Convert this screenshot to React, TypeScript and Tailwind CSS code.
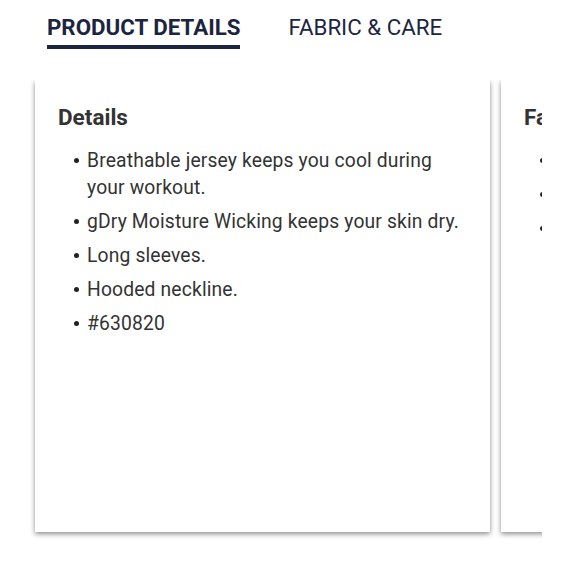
import React from "react";

const details = [
  "Breathable jersey keeps you cool during your workout.",
  "gDry Moisture Wicking keeps your skin dry.",
  "Long sleeves.",
  "Hooded neckline.",
  "#630820",
];

const fabric = ["\u00a0", "\u00a0", "\u00a0"];

function Card({ title, items }: { title: string; items: string[] }) {
  return (
    <div className="shrink-0 w-[455px] h-[452px] bg-white shadow-[0_2px_5px_rgba(0,0,0,0.45)] pl-[23px] pr-[30px] pt-[23px]">
      <h3 className="text-[22.5px] leading-[28px] font-bold text-[#333]">{title}</h3>
      <ul className="mt-[16px] pl-[16px] text-[19.3px] leading-[27px] text-[#333] tracking-[0.15px]">
        {items.map((item, i) => (
          <li key={i} className="mb-[7px] flex">
            <span className="mt-[11px] mr-[8px] h-[5px] w-[5px] shrink-0 rounded-full bg-[#222]" />
            <span>{item}</span>
          </li>
        ))}
      </ul>
    </div>
  );
}

export default function App() {
  return (
    <div className="w-[580px] h-[579px] bg-white font-['Roboto',sans-serif]">
      <div className="flex gap-[48px] pl-[47px] pt-[13px]">
        <div className="flex flex-col">
          <span className="text-[22.3px] leading-[28px] font-bold text-[#1b2540]">PRODUCT DETAILS</span>
          <span className="mt-[4px] h-[4px] bg-[#1b2540]" />
        </div>
        <span className="text-[22.3px] leading-[28px] text-[#1b2540]">FABRIC &amp; CARE</span>
      </div>
      <div className="ml-[30px] mt-[31px] w-[512px] overflow-hidden pl-[5px] pb-[10px]">
        <div className="flex gap-[11px]">
          <Card title="Details" items={details} />
          <Card title="Fabric & Care" items={fabric} />
        </div>
      </div>
    </div>
  );
}
